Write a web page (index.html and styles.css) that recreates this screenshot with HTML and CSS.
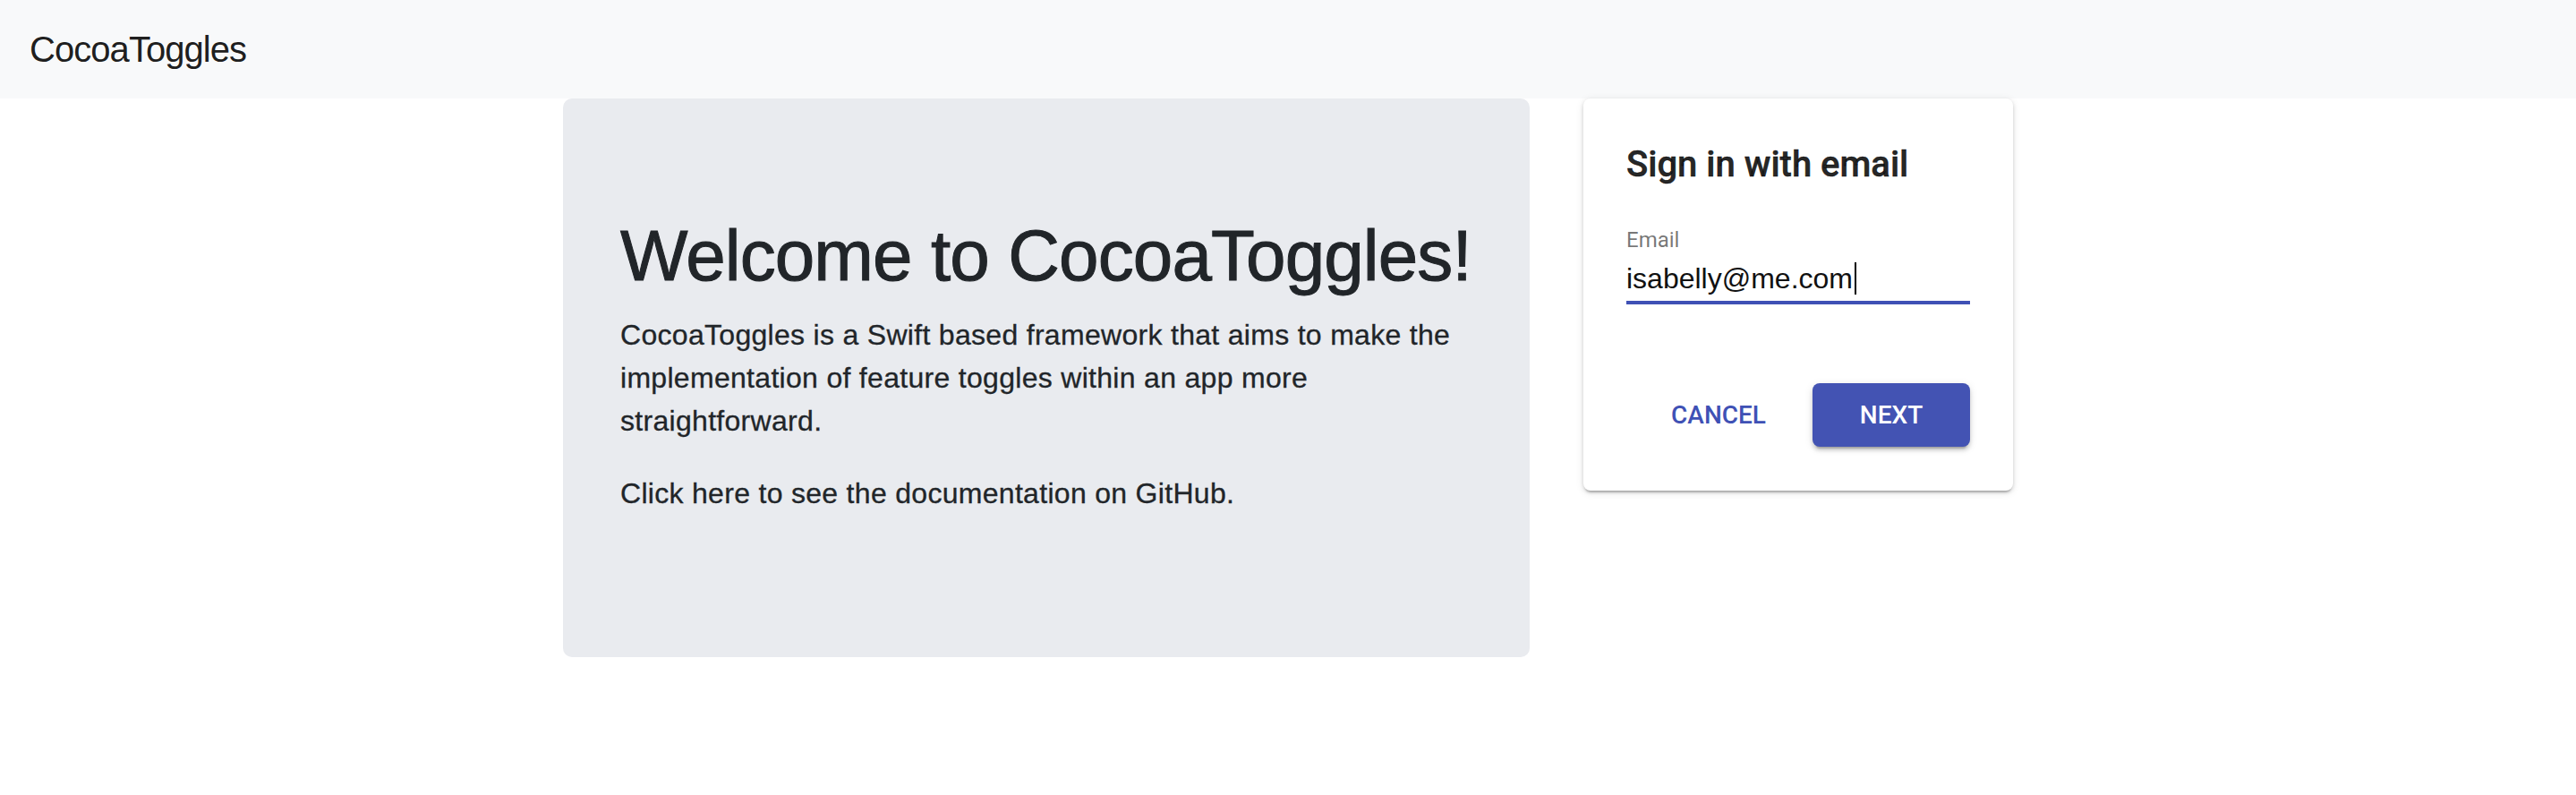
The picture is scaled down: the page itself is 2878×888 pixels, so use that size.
FILE: index.html
```html
<!DOCTYPE html>
<html lang="en">
<head>
<meta charset="utf-8">
<title>CocoaToggles</title>
<link rel="stylesheet" href="styles.css">
</head>
<body>
<header class="navbar">
  <span class="brand">CocoaToggles</span>
</header>
<main class="content">
  <section class="jumbotron">
    <h1 class="display">Welcome to CocoaToggles!</h1>
    <p class="lead">CocoaToggles is a Swift based framework that aims to make the implementation of feature toggles within an app more straightforward.</p>
    <p class="lead">Click here to see the documentation on GitHub.</p>
  </section>
  <section class="card">
    <h2 class="card-title">Sign in with email</h2>
    <div class="field">
      <label class="field-label">Email</label>
      <div class="field-input"><span class="field-value">isabelly@me.com</span><span class="caret"></span></div>
    </div>
    <div class="actions">
      <button class="btn btn-text">CANCEL</button>
      <button class="btn btn-contained">NEXT</button>
    </div>
  </section>
</main>
</body>
</html>
```
FILE: styles.css
```css
html, body {
  margin: 0;
  padding: 0;
  background: #ffffff;
}
body {
  font-family: "Liberation Sans", Arial, sans-serif;
  color: #212529;
}
.navbar {
  height: 110px;
  background: #f8f9fa;
  display: flex;
  align-items: center;
  padding: 0 33px;
  box-sizing: border-box;
}
.brand {
  font-size: 40px;
  line-height: 60px;
  letter-spacing: -0.95px;
  color: rgba(0, 0, 0, 0.9);
}
.content {
  display: flex;
  justify-content: center;
  align-items: flex-start;
  gap: 60px;
}
.jumbotron {
  width: 1080px;
  box-sizing: border-box;
  background: #e9ebef;
  border-radius: 10px;
  padding: 128px 64px 126px 64px;
}
.display {
  margin: 0 0 16px 0;
  font-size: 80px;
  line-height: 96px;
  font-weight: 400;
  letter-spacing: -0.9px;
  color: #212529;
  -webkit-text-stroke: 1px #212529;
}
.lead {
  margin: 0 0 33px 0;
  font-size: 32px;
  line-height: 48px;
  letter-spacing: 0.3px;
  color: #212529;
  -webkit-text-stroke: 0.3px #212529;
}
.card {
  width: 480px;
  box-sizing: border-box;
  background: #fff;
  border-radius: 8px;
  padding: 48px 48px 49px 48px;
  box-shadow: 0 4px 2px -2px rgba(0,0,0,0.2), 0 2px 4px 0 rgba(0,0,0,0.14), 0 2px 10px 0 rgba(0,0,0,0.1);
  font-family: Roboto, "Liberation Sans", sans-serif;
}
.card-title {
  margin: 0;
  font-size: 40px;
  line-height: 52px;
  font-weight: 500;
  color: rgba(0, 0, 0, 0.87);
  -webkit-text-stroke: 0.5px rgba(0, 0, 0, 0.87);
}
.field {
  margin-top: 46px;
  display: flex;
  flex-direction: column;
}
.field-label {
  font-size: 24px;
  line-height: 24px;
  color: rgba(0, 0, 0, 0.54);
}
.field-input {
  margin-top: 11px;
  padding-bottom: 5px;
  border-bottom: 4px solid #3f51b5;
  font-family: "Liberation Sans", Arial, sans-serif;
  font-size: 32px;
  line-height: 40px;
  color: #111;
  display: flex;
  align-items: center;
}
.caret {
  display: inline-block;
  width: 2px;
  height: 36px;
  background: #000;
  margin-left: 2px;
}
.actions {
  margin-top: 88px;
  display: flex;
  justify-content: flex-end;
  align-items: center;
  gap: 36px;
}
.btn {
  font-family: Roboto, "Liberation Sans", sans-serif;
  font-size: 28px;
  font-weight: 500;
  border: none;
  border-radius: 8px;
  height: 71px;
  cursor: pointer;
  background: transparent;
}
.btn-text {
  color: #3f51b5;
  padding: 0 16px;
}
.btn-contained {
  width: 176px;
  background: #4353b3;
  color: #fff;
  box-shadow: 0 6px 2px -4px rgba(0,0,0,0.2), 0 4px 4px 0 rgba(0,0,0,0.14), 0 2px 10px 0 rgba(0,0,0,0.12);
}
```
